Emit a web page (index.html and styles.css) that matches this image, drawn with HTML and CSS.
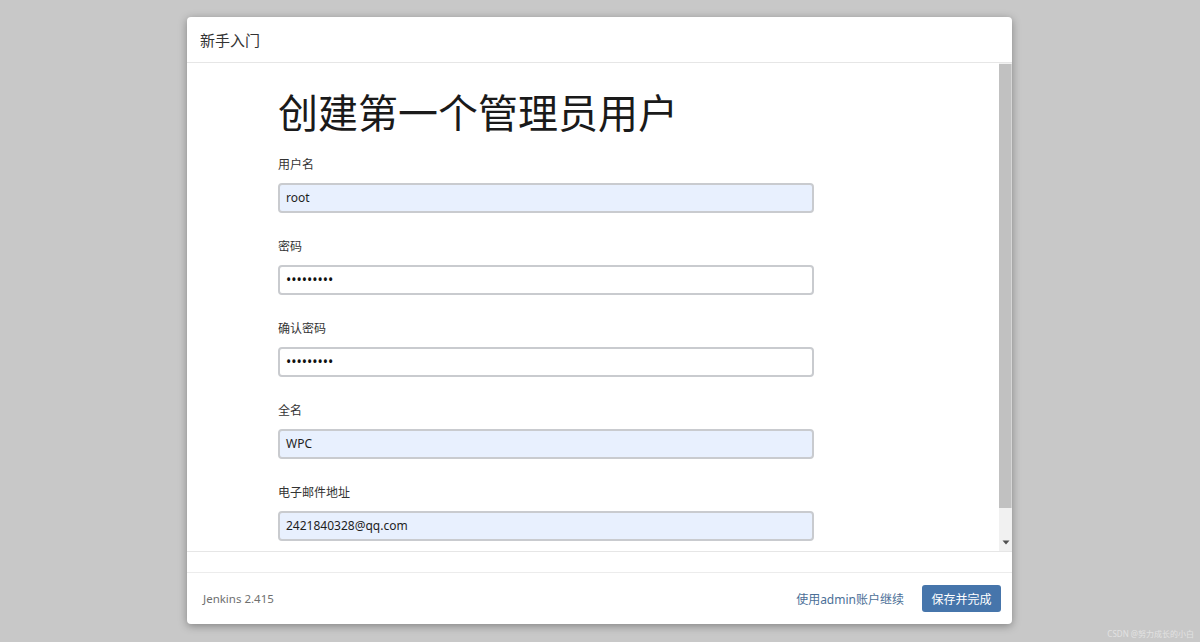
FILE: index.html
```html
<!DOCTYPE html>
<html lang="zh-CN">
<head>
<meta charset="utf-8">
<title>新手入门</title>
<link rel="stylesheet" href="styles.css">
</head>
<body>
<div class="modal">
  <div class="modal-header">新手入门</div>
  <div class="modal-body">
    <div class="content">
      <h1 class="title">创建第一个管理员用户</h1>
      <div class="group">
        <div class="label">用户名</div>
        <div class="input filled">root</div>
      </div>
      <div class="group">
        <div class="label">密码</div>
        <div class="input dots">•••••••••</div>
      </div>
      <div class="group">
        <div class="label">确认密码</div>
        <div class="input dots">•••••••••</div>
      </div>
      <div class="group">
        <div class="label">全名</div>
        <div class="input filled">WPC</div>
      </div>
      <div class="group">
        <div class="label">电子邮件地址</div>
        <div class="input filled">2421840328@qq.com</div>
      </div>
    </div>
    <div class="scrollbar">
      <div class="thumb"></div>
      <div class="track">
        <svg class="arrow" width="8" height="5" viewBox="0 0 8 5"><path d="M0.5 0.5 H7.5 L4 4.5 Z" fill="#505050"/></svg>
      </div>
    </div>
  </div>
  <div class="spacer"></div>
  <div class="modal-footer">
    <span class="version">Jenkins 2.415</span>
    <div class="actions">
      <span class="link">使用admin账户继续</span>
      <span class="btn">保存并完成</span>
    </div>
  </div>
</div>
<div class="watermark">CSDN @努力成长的小白</div>
</body>
</html>
```
FILE: styles.css
```css
html, body {
  margin: 0;
  padding: 0;
  height: 100%;
}
body {
  background: #c8c8c8;
  font-family: "Noto Sans", "Noto Sans CJK SC", sans-serif;
  display: flex;
  align-items: center;
  justify-content: center;
  position: relative;
  overflow: hidden;
}
.modal {
  width: 825px;
  height: 607px;
  margin-left: -1px;
  margin-top: -1px;
  background: #fff;
  border-radius: 4px;
  box-shadow: 0 2px 8px rgba(0, 0, 0, 0.35);
  display: flex;
  flex-direction: column;
  overflow: hidden;
}
.modal-header {
  height: 45px;
  border-bottom: 1px solid #e6e6e6;
  padding-left: 13px;
  display: flex;
  align-items: center;
  font-size: 15px;
  color: #333;
  flex: none;
}
.modal-body {
  height: 488px;
  border-bottom: 1px solid #e6e6e6;
  display: flex;
  flex: none;
}
.content {
  flex: 1;
  overflow: hidden;
  padding: 0 0 0 91px;
}
.title {
  margin: 20px 0 0 0;
  font-family: "Noto Sans CJK SC", sans-serif;
  font-weight: 400;
  font-size: 40px;
  line-height: 56px;
  color: #1a1a1a;
}
.group {
  width: 536px;
  margin-bottom: 25px;
}
.label {
  font-size: 12px;
  line-height: 18px;
  color: #333;
  margin-top: 17px;
  margin-bottom: 9px;
}
.group + .group .label {
  margin-top: 0;
}
.input {
  box-sizing: border-box;
  height: 30px;
  border: 2px solid #c9cbcf;
  border-radius: 4px;
  padding: 0 6px;
  font-size: 12px;
  line-height: 26px;
  color: #1e1e1e;
  background: #fff;
}
.input.filled {
  background: #e8f0fe;
}
.input.dots {
  font-size: 14px;
  color: #111;
}
.scrollbar {
  width: 13px;
  flex: none;
  display: flex;
  flex-direction: column;
  background: #f1f1f1;
}
.thumb {
  margin-top: 1px;
  height: 444px;
  background: #c1c1c1;
  border-right: 1px solid #d6d6d6;
}
.track {
  flex: 1;
  display: flex;
  align-items: flex-end;
  justify-content: center;
  padding-bottom: 6px;
}
.spacer {
  height: 20px;
  border-bottom: 1px solid #ececec;
  flex: none;
}
.modal-footer {
  flex: 1;
  display: flex;
  align-items: center;
  justify-content: space-between;
  padding: 0 11px 0 16px;
}
.version {
  font-size: 11.5px;
  color: #6f6f6f;
}
.actions {
  display: flex;
  align-items: center;
  gap: 18px;
}
.link {
  font-size: 12px;
  color: #4b6f97;
}
.btn {
  box-sizing: border-box;
  width: 79px;
  height: 27px;
  border-radius: 3px;
  background: #4675ab;
  color: #fff;
  font-size: 12px;
  display: flex;
  align-items: center;
  justify-content: center;
}
.watermark {
  position: absolute;
  right: 6px;
  bottom: 3px;
  font-size: 8px;
  color: #e2e2e2;
}
```
